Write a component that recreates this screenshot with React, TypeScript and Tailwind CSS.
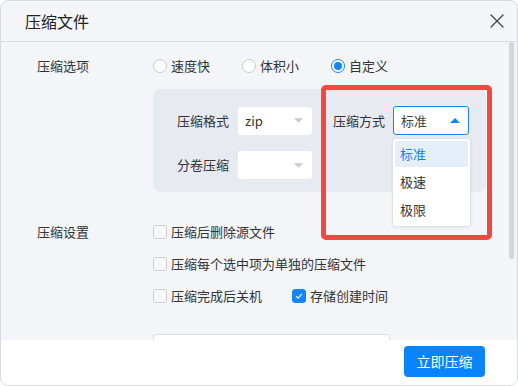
import { X } from "lucide-react";

function Radio({ label, checked }: { label: string; checked?: boolean }) {
  return (
    <label className="flex items-center gap-[4px]">
      <span
        className={`flex h-[14px] w-[14px] items-center justify-center rounded-full border bg-white ${
          checked ? "border-[#1684fc]" : "border-[#c9cace]"
        }`}
      >
        {checked && <span className="h-[8px] w-[8px] rounded-full bg-[#1684fc]" />}
      </span>
      <span className="text-[13px] leading-[22px] text-[#333]">{label}</span>
    </label>
  );
}

function Check({ label, checked }: { label: string; checked?: boolean }) {
  return (
    <label className="flex items-center gap-[4px]">
      <span
        className={`flex h-[14px] w-[14px] items-center justify-center rounded-[3px] border ${
          checked ? "border-[#1684fc] bg-[#1684fc]" : "border-[#cfd0d4] bg-[#f8f8fa]"
        }`}
      >
        {checked && (
          <svg viewBox="0 0 12 12" width="10" height="10" fill="none" stroke="white" strokeWidth="1.4">
            <path d="M2.5 6.2l2.3 2.3 4.7-5" />
          </svg>
        )}
      </span>
      <span className="text-[13px] leading-[22px] text-[#333]">{label}</span>
    </label>
  );
}

function Caret({ up, color }: { up?: boolean; color: string }) {
  return (
    <svg viewBox="0 0 10 5" width={up ? 10 : 9} height={5} fill={color}>
      <path d={up ? "M0 5L5 0l5 5z" : "M0 0h10L5 5z"} />
    </svg>
  );
}

export default function App() {
  return (
    <div className="relative flex h-[386px] w-[518px] flex-col overflow-hidden rounded-[8px] border border-[#d9dadf] bg-[#f4f5f9] font-['Noto_Sans_CJK_SC','Noto_Sans',sans-serif] text-[#333]">
      {/* header */}
      <div className="flex h-[41px] shrink-0 items-center justify-between border-b border-[#dcdde2] pl-[24px] pr-[8px]">
        <span className="text-[16px] leading-[20px] text-[#222]">压缩文件</span>
        <X size={24} strokeWidth={1.2} className="text-[#444]" />
      </div>

      {/* body */}
      <div className="relative flex-1 overflow-hidden pl-[36px]">
        <div className="mt-[13px] flex h-[22px] items-center">
          <span className="w-[116px] text-[13px] leading-[22px]">压缩选项</span>
          <div className="flex items-center gap-[32px]">
            <Radio label="速度快" />
            <Radio label="体积小" />
            <Radio label="自定义" checked />
          </div>
        </div>

        <div className="ml-[116px] mt-[12px] flex h-[103px] w-[333px] flex-col gap-[16px] rounded-[7px] bg-[#e8eaf2] pl-[24px] pt-[17px]">
          <div className="flex items-center">
            <span className="text-[13px] leading-[22px]">压缩格式</span>
            <div className="ml-[9px] flex h-[28px] w-[74px] items-center justify-between rounded-[3px] bg-white pl-[7px] pr-[9px]">
              <span className="text-[13px] text-[#333]">zip</span>
              <Caret color="#c8c9cc" />
            </div>
            <span className="ml-[21px] text-[13px] leading-[22px]">压缩方式</span>
            <div className="relative ml-[8px]">
              <div className="flex h-[29px] w-[76px] items-center justify-between rounded-[3px] border border-[#1a80f5] bg-white pl-[7px] pr-[8px]">
                <span className="text-[13px] text-[#444]">标准</span>
                <Caret up color="#1684fc" />
              </div>
              <div className="absolute left-[-1px] top-[32px] z-10 w-[79px] rounded-[3px] border border-[#e0e1e4] bg-white p-[2px] shadow-[0_1px_3px_rgba(0,0,0,0.06)]">
                <div className="flex h-[26px] items-center rounded-[2px] bg-[#e5effc] pl-[5px] text-[13px] text-[#1a7ff5]">标准</div>
                <div className="flex h-[29px] items-center pl-[5px] text-[13px] text-[#333]">极速</div>
                <div className="flex h-[28px] items-center pl-[5px] text-[13px] text-[#333]">极限</div>
              </div>
            </div>
          </div>
          <div className="flex items-center">
            <span className="text-[13px] leading-[22px]">分卷压缩</span>
            <div className="ml-[9px] flex h-[28px] w-[74px] items-center justify-end rounded-[3px] bg-white pr-[9px]">
              <Caret color="#c8c9cc" />
            </div>
          </div>
        </div>

        <div className="mt-[29px] flex">
          <span className="w-[116px] text-[13px] leading-[22px]">压缩设置</span>
          <div className="flex flex-col gap-[10px]">
            <Check label="压缩后删除源文件" />
            <Check label="压缩每个选中项为单独的压缩文件" />
            <div className="flex items-center gap-[30px]">
              <Check label="压缩完成后关机" />
              <Check label="存储创建时间" checked />
            </div>
          </div>
        </div>

        <div className="ml-[116px] mt-[27px] h-[30px] w-[237px] rounded-[4px] border border-[#dcdde0] bg-white" />

        {/* scrollbar */}
        <div className="absolute right-[3px] top-[0px] h-[217px] w-[5px] rounded-full bg-[#d5d6da]" />
      </div>

      {/* footer */}
      <div className="flex h-[45px] shrink-0 items-start justify-end bg-white pr-[32px] pt-[6px]">
        <button className="flex h-[31px] w-[81px] items-center justify-center rounded-[4px] bg-[#0a84fc] text-[14px] text-white">
          立即压缩
        </button>
      </div>

      {/* annotation */}
      <div className="pointer-events-none absolute left-[320px] top-[84px] h-[155px] w-[171px] rounded-[5px] border-[5px] border-[#ef4a3f]" />
    </div>
  );
}
